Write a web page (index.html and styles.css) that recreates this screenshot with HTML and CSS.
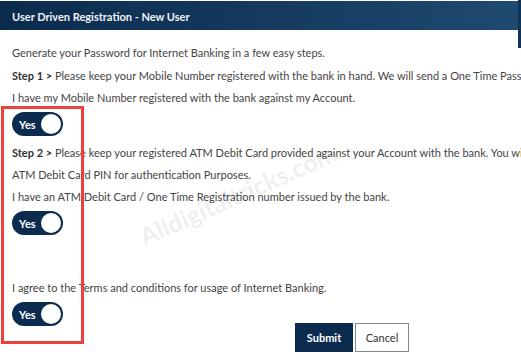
FILE: index.html
```html
<!DOCTYPE html>
<html>
<head>
<meta charset="utf-8">
<link rel="stylesheet" href="styles.css">
</head>
<body>
<div class="frame">
  <div class="modal">
    <div class="header">User Driven Registration - New User</div>
    <div class="content">
      <p class="line l-first">Generate your Password for Internet Banking in a few easy steps.</p>
      <p class="line"><b>Step 1 &gt;</b> Please keep your Mobile Number registered with the bank in hand. We will send a One Time Password (OTP) to this number.</p>
      <p class="line">I have my Mobile Number registered with the bank against my Account.</p>
      <div class="toggle"><span class="tlabel">Yes</span><span class="knob"></span></div>
      <p class="line l-step2"><b>Step 2 &gt;</b> Please keep your registered ATM Debit Card provided against your Account with the bank. You will be required to enter your</p>
      <p class="line">ATM Debit Card PIN for authentication Purposes.</p>
      <p class="line">I have an ATM Debit Card / One Time Registration number issued by the bank.</p>
      <div class="toggle"><span class="tlabel">Yes</span><span class="knob"></span></div>
      <p class="line l-agree">I agree to the Terms and conditions for usage of Internet Banking.</p>
      <div class="final-row">
        <div class="toggle"><span class="tlabel">Yes</span><span class="knob"></span></div>
        <div class="buttons">
          <button class="btn btn-primary">Submit</button>
          <button class="btn btn-default">Cancel</button>
        </div>
      </div>
    </div>
    <div class="highlight"></div>
    <div class="watermark">Alldigitaltricks.com</div>
  </div>
  <div class="edge"></div>
</div>
</body>
</html>
```

FILE: styles.css
```css
html, body {
  margin: 0;
  padding: 0;
  background: #ffffff;
  overflow: hidden;
  width: 521px;
  height: 364px;
}
body {
  font-family: "Lato", "Open Sans", sans-serif;
  font-size: 11px;
  color: #444444;
}
.frame {
  display: flex;
  align-items: flex-start;
  width: 521px;
}
.modal {
  position: relative;
  width: 518px;
  flex: 0 0 518px;
}
.edge {
  width: 3px;
  height: 48px;
  flex: 0 0 3px;
  background: #0f3456;
}
.header {
  margin-top: 1px;
  height: 29px;
  line-height: 31px;
  padding-left: 12px;
  background: linear-gradient(to right, #0b2b4d 0%, #153b60 55%, #1f4a70 100%);
  color: #eef2f6;
  font-size: 11px;
  font-weight: 700;
}
.content {
  padding: 12px 0 0 12px;
}
.line {
  margin: 0;
  height: 22px;
  line-height: 22px;
  white-space: nowrap;
}
.l-first { margin-bottom: 1px; }
.line b { font-weight: 700; color: #333; }
.l-step2 { margin-top: 6px; }
.l-agree { margin-top: 42px; }
.toggle {
  margin-top: 3px;
  width: 51px;
  height: 24px;
  border-radius: 12px;
  background: #0c2c4f;
  display: flex;
  align-items: center;
  justify-content: space-between;
  box-sizing: border-box;
  padding: 0 2px 0 7px;
}
.tlabel {
  color: #ffffff;
  font-weight: 700;
  font-size: 11px;
}
.knob {
  width: 20px;
  height: 20px;
  border-radius: 50%;
  background: #ffffff;
}
.final-row {
  display: flex;
  align-items: flex-start;
}
.buttons {
  display: flex;
  gap: 2px;
  margin-left: 232px;
  margin-top: 24px;
}
.btn {
  height: 29px;
  font-family: "Lato", "Open Sans", sans-serif;
  font-size: 11px;
  border-radius: 0;
  cursor: pointer;
  padding: 0;
}
.btn-primary {
  width: 58px;
  background: #0c2c4f;
  color: #ffffff;
  border: 1px solid #0c2c4f;
  font-weight: 700;
}
.btn-default {
  width: 54px;
  background: #ffffff;
  color: #333333;
  border: 1px solid #7d8b99;
}
.highlight {
  position: absolute;
  left: 1px;
  top: 106px;
  width: 83px;
  height: 238px;
  box-sizing: border-box;
  border: 3px solid #ee3f3f;
  pointer-events: none;
}
.watermark {
  position: absolute;
  left: 146px;
  top: 224px;
  font-size: 25px;
  line-height: 25px;
  font-weight: 700;
  color: rgba(0, 0, 0, 0.085);
  transform: rotate(-24deg);
  transform-origin: left bottom;
  white-space: nowrap;
  pointer-events: none;
}
```
